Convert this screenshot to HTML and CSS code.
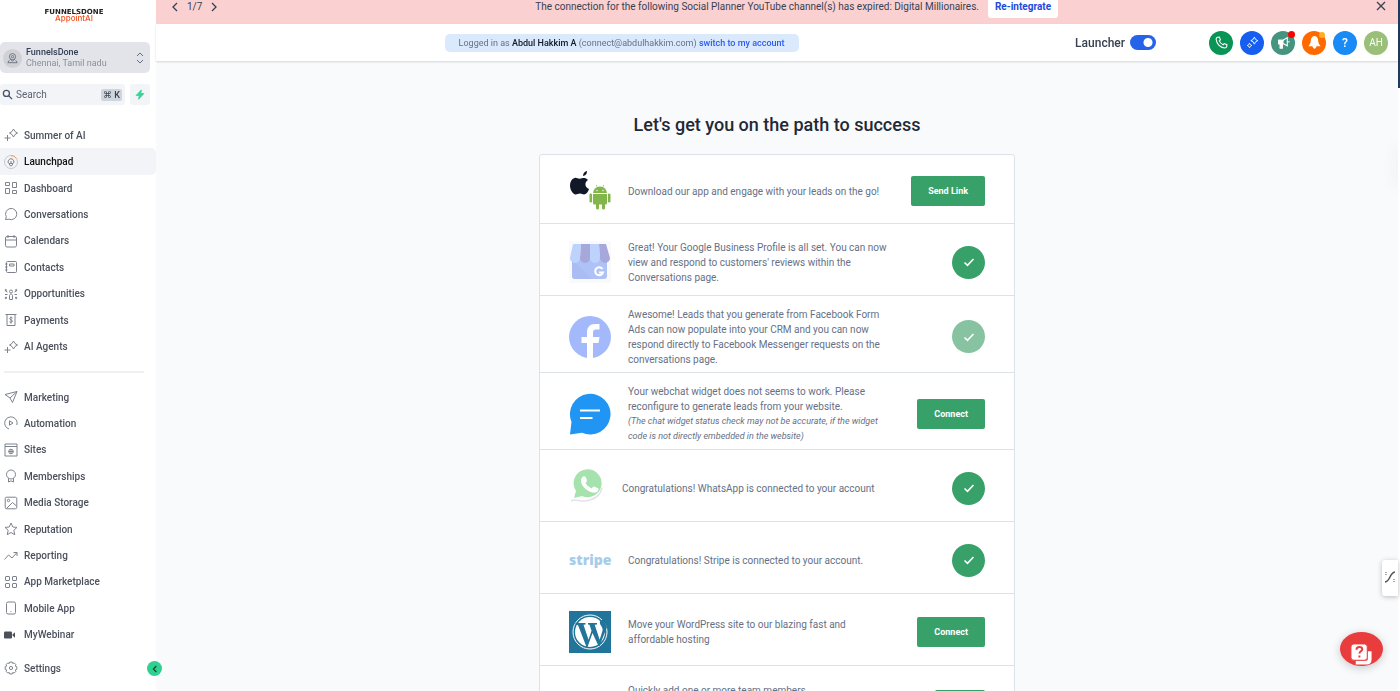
FILE: index.html
```html
<!DOCTYPE html>
<html lang="en">
<head>
    <meta charset="UTF-8">
    <meta name="viewport" content="width=device-width, initial-scale=1.0">
    <title>Launchpad</title>
    <link rel="stylesheet" href="styles.css">
</head>
<body>
    <svg class="sprite" aria-hidden="true">
        <symbol id="sparkles" viewBox="0 0 14 14">
            <path d="M9.5 1 11 3.5 13.500 5 11 6.500 9.500 9 8 6.500 5.500 5 8 3.500zM3.500 7v6M.5 10h6"/>
        </symbol>
        <symbol id="check" viewBox="0 0 12 12">
            <path d="M1.500 6.500 4.500 9.300 10.500 3"/>
        </symbol>
    </svg>

    <div class="app">
        <aside class="sidebar">
            <div class="logo">
                <span class="logo-top">FUNNELSDONE</span>
                <span class="logo-bottom">AppointAI</span>
            </div>

            <button class="account">
                <span class="account-icon">
                    <svg viewBox="0 0 14 14"><circle cx="7" cy="5" r="3.300"/><circle cx="7" cy="5" r="1.200"/><path d="M4.500 7.500 7 10l2.500-2.500M3.500 9 2 11.500h10L10.500 9"/></svg>
                </span>
                <span class="account-text">
                    <strong>FunnelsDone</strong>
                    <span>Chennai, Tamil nadu</span>
                </span>
                <svg class="account-arrows" viewBox="0 0 8 12"><path d="M1 4 4 1 7 4M1 8 4 11 7 8"/></svg>
            </button>

            <div class="search-row">
                <label class="search">
                    <svg viewBox="0 0 12 12"><circle cx="4.800" cy="4.800" r="3.300"/><path d="M7.300 7.300 11 11"/></svg>
                    <input type="text" placeholder="Search" aria-label="Search">
                    <kbd>⌘ K</kbd>
                </label>
                <button class="bolt" aria-label="Quick actions">
                    <svg viewBox="0 0 10 12"><path d="M6.500 1 .8 7h3.400L3.500 11.200 9.200 5H5.800z"/></svg>
                </button>
            </div>

            <nav class="menu">
                <ul class="menu-main">
                    <li><a href="#"><svg><use href="#sparkles"/></svg>Summer of AI</a></li>
                    <li><a href="#" class="active"><svg viewBox="0 0 14 14"><circle cx="7" cy="7" r="6.500" class="ring"/><path d="M7 .5A6.500 6.500 0 0 1 12.500 3.500" class="ring-done"/><path d="M4 7.500C4 2.500 10 2.500 10 7.500L8.500 8.500h-3zM5.500 8.500V10l1.500 1 1.500-1V8.500M7 6v3"/></svg>Launchpad</a></li>
                    <li><a href="#"><svg viewBox="0 0 14 14"><path d="M1.500 1.500h4v3h-4zM1.500 7.500h4v5h-4zM8.500 1.500h4v5h-4zM8.500 9.500h4v3h-4z"/></svg>Dashboard</a></li>
                    <li><a href="#"><svg viewBox="0 0 14 14"><path d="M1.500 12.500 2.300 9.800A5.600 5.600 0 1 1 5 12.200z"/></svg>Conversations</a></li>
                    <li><a href="#"><svg viewBox="0 0 14 14"><rect x="1.500" y="2.500" width="11" height="10.500" rx="1.500"/><path d="M1.500 6h11M4 1v3M10 1v3"/></svg>Calendars</a></li>
                    <li><a href="#"><svg viewBox="0 0 14 14"><rect x="2.500" y="1.500" width="10" height="11" rx="1"/><path d="M5.500 4h4.500v2H5.500zM1 4h2.500M1 7h2.500M1 10h2.500"/></svg>Contacts</a></li>
                    <li><a href="#"><svg viewBox="0 0 14 14"><circle cx="7" cy="4.500" r="1.500"/><path d="M5.500 12.500v-4C5.500 6.500 8.500 6.500 8.500 8.500v4zM1 3.500l2.500 1.500M13 3.500 10.500 5M1 11.500 3 10M13 11.500 11 10M1 7.500h2.500M10.500 7.500H13"/><circle cx="1.800" cy="3" r=".7"/><circle cx="12.200" cy="3" r=".7"/><circle cx="1.800" cy="11" r=".7"/><circle cx="12.200" cy="11" r=".7"/></svg>Opportunities</a></li>
                    <li><a href="#"><svg viewBox="0 0 14 14"><path d="M1.500 1.500h11M3 1.500v11h8v-11M8.500 5C7.500 4 5.500 4.500 5.700 5.700 6 7 8.400 6.700 8.400 8.200 8.300 9.700 6 9.500 5.500 8.700M7 3.500v7"/></svg>Payments</a></li>
                    <li><a href="#"><svg><use href="#sparkles"/></svg>AI Agents</a></li>
                </ul>
                <hr>
                <ul class="menu-more">
                    <li><a href="#"><svg viewBox="0 0 14 14"><path d="M1 4.500 13 1.500 8.500 12.500 6 8zM6 8 13 1.500"/></svg>Marketing</a></li>
                    <li><a href="#"><svg viewBox="0 0 14 14"><path d="M5 13A6.200 6.200 0 1 1 12.800 9M5.500 4.800v4.400L9 7z"/></svg>Automation</a></li>
                    <li><a href="#"><svg viewBox="0 0 14 14"><path d="M1 1h12v12H1zM1 3.500h12"/><circle cx="7" cy="8.500" r="2.300"/><path d="M4.700 8.500h4.600M7 6.200v4.600"/></svg>Sites</a></li>
                    <li><a href="#"><svg viewBox="0 0 14 14"><circle cx="7" cy="5.500" r="4.500"/><path d="M4.500 9.300V13L7 11.800 9.500 13V9.300"/></svg>Memberships</a></li>
                    <li><a href="#"><svg viewBox="0 0 14 14"><rect x="1.200" y="1.200" width="11.600" height="11.600" rx="1.500"/><circle cx="4.500" cy="4.500" r="1.200"/><path d="M2.500 12.500 8.500 6.500 12.500 10"/></svg>Media Storage</a></li>
                    <li><a href="#"><svg viewBox="0 0 14 14"><path d="m7 1 1.800 4 4.200.4-3.200 2.900 1 4.400L7 10.500l-3.800 2.200 1-4.400L1 5.400 5.200 5z"/></svg>Reputation</a></li>
                    <li><a href="#"><svg viewBox="0 0 14 14"><path d="M.5 10.500 4.500 6 8 9l5-5.500M9.500 3.500H13V7"/></svg>Reporting</a></li>
                    <li><a href="#"><svg viewBox="0 0 14 14"><rect x="1.500" y="1.500" width="4" height="4" rx=".5"/><rect x="8.500" y="1.500" width="4" height="4" rx=".5"/><rect x="1.500" y="8.500" width="4" height="4" rx=".5"/><rect x="8.500" y="8.500" width="4" height="4" rx=".5"/></svg>App Marketplace</a></li>
                    <li><a href="#"><svg viewBox="0 0 14 14"><rect x="2.500" y="1" width="9" height="12" rx="1.500"/><path d="M6.600 10.500h.8"/></svg>Mobile App</a></li>
                    <li><a href="#"><svg viewBox="0 0 14 14" class="solid"><rect x="0" y="3.500" width="8" height="7" rx="1.200"/><path d="M8.500 6.500 11 4.200v5.600L8.500 7.500z"/></svg>MyWebinar</a></li>
                </ul>
                <a href="#" class="settings"><svg viewBox="0 0 14 14"><path d="m5.800 1h2.400l.5 1.500 1.500-.6 1.700 1.700-.6 1.500 1.500.6v2.600l-1.500.6.6 1.500-1.700 1.700-1.500-.6-.5 1.500H5.800l-.5-1.500-1.500.6-1.700-1.700.6-1.500L1.200 8.300V5.700l1.500-.6-.6-1.500 1.700-1.700 1.500.6z"/><circle cx="7" cy="7" r="1.600"/></svg>Settings</a>
            </nav>

            <button class="collapse" aria-label="Collapse menu">
                <svg viewBox="0 0 8 8"><path d="M5.300 1 2.500 4l2.800 3"/></svg>
            </button>
        </aside>

        <div class="page">
            <div class="banner">
                <div class="pager">
                    <button aria-label="Previous"><svg viewBox="0 0 6 10"><path d="M5 1 1 5l4 4"/></svg></button>
                    <span>1/7</span>
                    <button aria-label="Next"><svg viewBox="0 0 6 10"><path d="m1 1 4 4-4 4"/></svg></button>
                </div>
                <div class="banner-message">
                    <span>The connection for the following Social Planner YouTube channel(s) has expired: Digital Millionaires.</span>
                    <button class="reintegrate">Re-integrate</button>
                </div>
                <button class="banner-close" aria-label="Close"><svg viewBox="0 0 10 10"><path d="m1 1 8 8M9 1 1 9"/></svg></button>
            </div>

            <header class="topbar">
                <div class="login-wrap">
                    <p class="login-note">Logged in as <b>Abdul Hakkim A</b> (connect@abdulhakkim.com) <a href="#">switch to my account</a></p>
                </div>
                <label class="launcher">Launcher <input type="checkbox" checked></label>
                <div class="actions">
                    <button class="action phone" aria-label="Phone"><svg viewBox="0 0 12 12"><path d="M2.300 1.200 4 1 5 3.500 3.900 4.500Q5 7 7.500 8.100L8.500 7 11 8l-.2 1.700Q10.500 11 9 11C4.500 10.500 1.500 7 1 3 1 1.800 1.600 1.300 2.300 1.200z"/></svg></button>
                    <button class="action ai" aria-label="AI"><svg viewBox="0 0 14 14"><path d="M9 1.200 10.300 3.700 12.800 5 10.300 6.300 9 8.800 7.700 6.300 5.200 5 7.700 3.700zM3.800 7.800 4.700 9.300 6.200 10.200 4.700 11.100 3.800 12.600 2.900 11.100 1.400 10.200 2.900 9.300z"/></svg></button>
                    <button class="action news" aria-label="Announcements"><svg viewBox="0 0 12 12"><path d="M1.500 4h4L9.500 1.500v7.500L5.500 7h-4zM3 7v4h2V7" /><path d="M1.500 4h4v3h-4zM3 7h2v4H3z" class="fill"/><path d="M11 4.500v1.500"/></svg><i class="dot"></i></button>
                    <button class="action bell" aria-label="Notifications"><svg viewBox="0 0 12 12"><path class="fill" d="M6 .5C3.500 1 3 3 3 5c0 2-.7 2.700-1.700 4h9.400C9.700 7.700 9 7 9 5c0-2-.5-4-3-4.500zM4.800 10h2.400Q6 12.500 4.800 10z"/></svg><i class="dot"></i></button>
                    <button class="action help">?</button>
                    <button class="action avatar">AH</button>
                </div>
            </header>

            <main class="content">
                <h1>Let's get you on the path to success</h1>
                <div class="steps">
                    <section class="step first">
                        <svg class="step-icon" viewBox="0 0 42 42">
                            <path fill="#111827" d="M14 6C14 3 16 1.500 18 1c.2 2.800-1.500 4.800-4 5zM5.500 8C7.500 7.300 9 9 11 8.700c2-.2 5-2 8 1.300-4 2.500-3 7.500 1 9-1 3-3 5.500-5 5.500-1.500 0-2-1-4-1s-2.800 1-4.300 1C3.500 24 1 19.500 1 15.500 1 12 2.500 9 5.500 8z"/>
                            <path fill="#82b64a" d="M24 23c.4-3.200 2-5 4-5.800L26.800 15l.5-.2 1.200 2.100q2.500-.7 5 0l1.200-2.100.5.200L34 17.200c2 .8 3.600 2.600 4 5.800zM24 24h14v9q0 1.500-1.500 1.500H36V38q0 1.500-1.500 1.500T33 38v-3.500h-3V38q0 1.500-1.500 1.500T27 38v-3.500h-1.500Q24 34.500 24 33z"/>
                            <rect x="20.500" y="23.500" width="2.600" height="9" rx="1.300" fill="#82b64a"/><rect x="38.900" y="23.500" width="2.600" height="9" rx="1.300" fill="#82b64a"/>
                            <circle cx="28" cy="20.500" r=".7" fill="#fff"/><circle cx="34" cy="20.500" r=".7" fill="#fff"/>
                        </svg>
                        <p>Download our app and engage with your leads on the go!</p>
                        <button class="btn">Send Link</button>
                    </section>
                    <section class="step">
                        <svg class="step-icon" viewBox="0 0 42 42">
                            <path fill="#fafafc" d="M0 0h42v42H0z"/>
                            <path fill="#aec2f8" d="M3 15h35v20q0 3-3 3H6q-3 0-3-3z"/>
                            <path fill="#a3b5ed" d="M3 18 22 38H6q-3 0-3-3z" opacity=".5"/>
                            <path fill="#bdd3fb" d="M4 3h8l-1 14a5 5 0 0 1-10 0z"/>
                            <path fill="#a6a8dc" d="M12 3h9v14a5 5 0 0 1-10 0z"/>
                            <path fill="#bdd3fb" d="M21 3h9l1 14a5 5 0 0 1-10 0z"/>
                            <path fill="#a6a8dc" d="M30 3h7l4 14a5 5 0 0 1-10 0z"/>
                            <path fill="none" stroke="#fff" stroke-width="2" d="M33.500 28a4 4 0 1 0 .5 3.500h-4"/>
                        </svg>
                        <p>Great! Your Google Business Profile is all set. You can now view and respond to customers' reviews within the Conversations page.</p>
                        <span class="done"><svg><use href="#check"/></svg></span>
                    </section>
                    <section class="step tall">
                        <svg class="step-icon" viewBox="0 0 42 42">
                            <circle cx="21" cy="21" r="21" fill="#a3b9fb"/>
                            <path fill="#fff" d="M18 42V27h-5.500v-6H18v-4.500C18 11 21 8 26 8h4.500v5.500H27q-3 0-3 3V21h6.500l-1 6H24v15z"/>
                        </svg>
                        <p>Awesome! Leads that you generate from Facebook Form Ads can now populate into your CRM and you can now respond directly to Facebook Messenger requests on the conversations page.</p>
                        <span class="done faded"><svg><use href="#check"/></svg></span>
                    </section>
                    <section class="step tall">
                        <svg class="step-icon" viewBox="0 0 42 42">
                            <path fill="#2095f3" d="M1 41.500 2.500 29A20.300 20.300 0 1 1 13 39.700z"/>
                            <path stroke="#fff" stroke-width="2" d="M11 17.500h20M11 25h12.500"/>
                        </svg>
                        <p>Your webchat widget does not seems to work. Please reconfigure to generate leads from your website. <em>(The chat widget status check may not be accurate, if the widget code is not directly embedded in the website)</em></p>
                        <button class="btn">Connect</button>
                    </section>
                    <section class="step whatsapp">
                        <svg class="step-icon" viewBox="0 0 36 42">
                            <path fill="none" stroke="#e3e3ea" stroke-width="1.500" d="M2 34c5-3 8 1 14 0 9-1 15-5 17-13"/>
                            <path fill="#a6e2ad" d="M5 31 7 24A14 14 0 1 1 13 29z"/>
                            <path fill="#fff" d="M14 9.500q2-1 2.700.8l1.300 3q.2 1-1.500 2.700 2 4 6 5.500l2-2q.6-.6 4.500 1.800 1 .7 0 2.500c-2 3-6 2-9.500.2-4-2.200-7-6-7.500-9.500-.2-2 .5-4 2-5z"/>
                        </svg>
                        <p>Congratulations! WhatsApp is connected to your account</p>
                        <span class="done"><svg><use href="#check"/></svg></span>
                    </section>
                    <section class="step">
                        <span class="step-icon stripe">stripe</span>
                        <p>Congratulations! Stripe is connected to your account.</p>
                        <span class="done"><svg><use href="#check"/></svg></span>
                    </section>
                    <section class="step">
                        <svg class="step-icon" viewBox="0 0 42 42">
                            <path fill="#21759b" d="M0 0h42v42H0z"/>
                            <circle cx="21" cy="21" r="17" fill="none" stroke="#fff"/>
                            <circle cx="21" cy="21" r="15" fill="#fff"/>
                            <path fill="#21759b" d="M6.500 12h10v1.500l-2 .3 5 15 3-9-2-6-1.500-.3V12h9v1.500l-2.300.3 5 15 2.800-9C34.500 16 30 14 31 10.500q1-2.500 4-1.500l3 7-7.500 19h-1L23.500 22l-5 14h-1L9 14l-2.500-.5z"/>
                        </svg>
                        <p>Move your WordPress site to our blazing fast and affordable hosting</p>
                        <button class="btn">Connect</button>
                    </section>
                    <section class="step last">
                        <span class="step-icon"></span>
                        <p>Quickly add one or more team members</p>
                        <button class="btn" aria-label="Add team members"></button>
                    </section>
                </div>
            </main>
        </div>
    </div>

    <div class="edge-bar"></div>
    <div class="edge-shadow"></div>
    <button class="side-tab" aria-label="Open panel">
        <svg viewBox="0 0 10 12"><path stroke-width="1.500" d="M0 11c6-1 4-9 10-10" /><path d="M1 1v4M9 8v4" stroke-dasharray="1 1"/></svg>
    </button>
    <button class="support" aria-label="Support">
        <svg viewBox="0 0 24 24">
            <path fill="none" stroke="#fff" stroke-width="4" d="M20.500 8.500V17q0 3.500-3 3.500H6"/>
            <rect x="1" y="1" width="17" height="17" rx="3" fill="#fff" stroke="#e93d3d"/>
            <path fill="none" stroke="#e93d3d" stroke-width="2" d="M6.800 7c0-4 6-3.500 6-.5 0 2-3 2.300-3 4.500M9.800 13v2"/>
        </svg>
    </button>
</body>
</html>
```
FILE: styles.css
```css
* {
    box-sizing: border-box;
}
body {
    margin: 0;
    height: 100vh;
    overflow: hidden;
    font-family: Roboto, "Liberation Sans", sans-serif;
    font-size: 10px;
    color: #374151;
    background: #fff;
}
button {
    padding: 0;
    border: none;
    background: none;
    font-family: inherit;
    color: inherit;
    cursor: pointer;
}
svg {
    fill: none;
    stroke: currentColor;
    stroke-width: 1;
}
a {
    text-decoration: none;
}
p {
    margin: 0;
}
.sprite {
    display: none;
}
.app {
    display: flex;
    height: 100%;
    padding-right: 2px;
}

/* Sidebar */
.sidebar {
    position: relative;
    display: flex;
    flex-direction: column;
    width: 156px;
    flex-shrink: 0;
    padding-top: 9px;
    z-index: 2;
}
.logo {
    display: flex;
    flex-direction: column;
    align-items: center;
    height: 33px;
    padding-right: 8px;
}
.logo-top {
    font-family: "DejaVu Sans", sans-serif;
    font-size: 7px;
    font-weight: bold;
    line-height: 6px;
    color: #222;
}
.logo-bottom {
    font-family: Inter, sans-serif;
    font-size: 8px;
    font-weight: 500;
    line-height: 7px;
    color: #f4511e;
}
.account {
    display: flex;
    align-items: center;
    gap: 4px;
    height: 31px;
    margin-right: 6px;
    padding: 1px 6px 0 3px;
    border-radius: 5px;
    background: #e2e4e9;
    text-align: left;
}
.account-icon {
    display: flex;
    padding: 3px;
    border-radius: 50%;
    background: #cfd1d5;
    color: #6b7280;
}
.account-icon svg {
    width: 13px;
    height: 13px;
}
.account-text {
    display: flex;
    flex-direction: column;
    flex: 1;
    font-size: 9px;
    line-height: 11px;
    color: #8a8f9c;
}
.account-text strong {
    font-weight: 500;
    color: #344054;
}
.account-arrows {
    width: 8px;
    height: 12px;
    color: #667085;
}
.search-row {
    display: flex;
    gap: 5px;
    height: 21px;
    margin: 11px 6px 17px 0;
}
.search {
    display: flex;
    flex: 1;
    align-items: center;
    gap: 3px;
    padding: 0 3px 0 2px;
    border-radius: 3px;
    background: #f2f4f7;
    color: #475467;
}
.search svg {
    width: 11px;
    height: 11px;
    flex-shrink: 0;
    stroke-width: 1.4;
}
.search input {
    width: 0;
    flex: 1;
    padding: 0;
    border: none;
    outline: none;
    background: none;
    font: inherit;
    color: inherit;
}
.search input::placeholder {
    color: #5b6472;
}
.search kbd {
    padding: 0 2px;
    border-radius: 2px;
    background: #d0d4dc;
    font-family: Roboto, "DejaVu Sans", sans-serif;
    font-size: 9px;
    font-weight: 500;
    line-height: 12px;
    color: #374151;
}
.bolt {
    width: 20px;
    border-radius: 3px;
    background: #f2f4f7;
}
.bolt svg {
    display: block;
    width: 10px;
    height: 11px;
    margin: auto;
    fill: #36d399;
    stroke: #36d399;
}
.menu {
    display: flex;
    flex: 1;
    flex-direction: column;
    min-height: 0;
}
.menu ul {
    display: flex;
    flex-direction: column;
    margin: 0;
    padding: 0;
    list-style: none;
}
.menu .menu-main {
    flex: 9 1 0;
}
.menu .menu-more {
    flex: 10 1 0;
}
.menu li {
    display: flex;
    flex: 1;
}
.menu a {
    display: flex;
    flex: 1;
    align-items: center;
    gap: 6px;
    padding-left: 4px;
    border-radius: 0 5px 5px 0;
    font-weight: 500;
    color: #4b515c;
}
.menu a.active {
    background: #f2f4f7;
    color: #111;
}
.menu svg {
    width: 14px;
    height: 14px;
    flex-shrink: 0;
    color: #7d828c;
}
.menu svg.solid {
    fill: #4b5059;
    stroke: none;
}
.menu .ring {
    stroke: #c4c8cf;
}
.menu .ring-done {
    stroke: #f59e5b;
}
.menu hr {
    width: 140px;
    height: 2px;
    margin: 11px 0 11px 4px;
    border: none;
    background: #eef0f2;
}
.menu .settings {
    flex: none;
    height: 26px;
    margin: 7px 0 10px;
}
.collapse {
    position: absolute;
    right: -6px;
    bottom: 15px;
    width: 15px;
    height: 15px;
    border-radius: 50%;
    background: #2fd092;
    color: #14532d;
}
.collapse svg {
    display: block;
    width: 8px;
    height: 8px;
    margin: auto;
    stroke-width: 1.4;
}

/* Top area */
.page {
    display: flex;
    flex: 1;
    flex-direction: column;
    min-width: 0;
}
.banner {
    display: flex;
    align-items: flex-end;
    height: 24px;
    flex-shrink: 0;
    padding: 0 12px 6px 16px;
    overflow: hidden;
    background: #fad1d0;
    line-height: 22px;
}
.banner svg {
    height: 10px;
    stroke-width: 1.3;
}
.pager {
    display: flex;
    gap: 9px;
}
.pager svg {
    width: 6px;
}
.banner-message {
    display: flex;
    flex: 1;
    justify-content: center;
    gap: 9px;
    white-space: nowrap;
}
.reintegrate {
    padding: 0 7px;
    border-radius: 3px;
    background: #fff;
    font-size: 10px;
    font-weight: 700;
    line-height: 22px;
    color: #2348dc;
}
.banner-close {
    line-height: 22px;
}
.banner-close svg {
    width: 10px;
}
.topbar {
    display: flex;
    align-items: center;
    height: 37px;
    flex-shrink: 0;
    padding: 0 10px 0 22px;
    background: #fff;
    box-shadow: 0 1px 2px rgba(0, 0, 0, 0.15);
    z-index: 1;
}
.login-wrap {
    display: flex;
    flex: 1;
    justify-content: center;
}
.login-note {
    padding: 0 14px;
    border-radius: 5px;
    background: #dbe9fd;
    font-size: 9px;
    line-height: 18px;
    color: #667085;
}
.login-note b {
    font-weight: 500;
    color: #111827;
}
.login-note a {
    font-weight: 500;
    color: #2a5cf0;
}
.launcher {
    display: flex;
    align-items: center;
    gap: 5px;
    margin: 0 53px 0 10px;
    font-size: 12px;
    font-weight: 500;
}
.launcher input {
    appearance: none;
    width: 26px;
    height: 15px;
    margin: 0;
    border-radius: 8px;
    background: radial-gradient(circle at 18px 50%, #fff 4px, #2563eb 5px);
}
.actions {
    display: flex;
    gap: 7px;
}
.action {
    position: relative;
    display: flex;
    align-items: center;
    justify-content: center;
    width: 24px;
    height: 24px;
    border-radius: 50%;
    color: #fff;
    font-size: 12px;
}
.action svg {
    width: 13px;
    height: 13px;
}
.action .fill {
    fill: #fff;
}
.phone {
    background: #079455;
}
.ai {
    background: #155eef;
}
.news {
    background: #459480;
}
.bell {
    background: #ff6a00;
}
.help {
    background: #188bf6;
    font-weight: 500;
}
.avatar {
    background: #9abf78;
    font-size: 10px;
}
.dot {
    position: absolute;
    top: 0;
    right: 0;
    width: 7px;
    height: 7px;
    border-radius: 50%;
    background: #f00;
}
.bell .dot {
    top: 1px;
    right: 1px;
    width: 6px;
    height: 6px;
    background: #fdb022;
}

/* Launchpad steps */
.content {
    flex: 1;
    min-height: 0;
    padding-top: 52px;
    overflow: hidden;
    background: #f9fafb;
}
h1 {
    margin: 0 0 17px;
    font-size: 18px;
    font-weight: 500;
    line-height: 24px;
    text-align: center;
    color: #1f2937;
}
.steps {
    max-width: 476px;
    margin: 0 auto;
    border: 1px solid #dde2ea;
    border-radius: 3px;
    background: #fff;
}
.step {
    display: flex;
    align-items: center;
    min-height: 72px;
    padding: 5px 29px 0;
    border-bottom: 1px solid #dde2ea;
}
.step.first {
    min-height: 69px;
    padding-top: 4px;
}
.step.tall {
    min-height: 77px;
}
.step.last {
    align-items: flex-start;
    padding-top: 17px;
}
.step-icon {
    width: 42px;
    height: 42px;
    flex-shrink: 0;
    margin-right: 17px;
    stroke: none;
}
.whatsapp .step-icon {
    width: 36px;
}
.stripe {
    font-family: "Open Sans", sans-serif;
    font-size: 14px;
    font-weight: 800;
    line-height: 42px;
    color: #a5cdea;
}
.step p {
    max-width: 266px;
    line-height: 15px;
    color: #667085;
}
.step em {
    display: block;
    font-size: 9px;
}
.btn,
.done {
    flex-shrink: 0;
    margin-left: auto;
    background: #38a169;
    color: #fff;
}
.btn {
    padding: 0 17px;
    border-radius: 2px;
    font-size: 9px;
    font-weight: 700;
    line-height: 30px;
}
.last .btn {
    width: 50px;
    height: 30px;
    margin-top: 7px;
}
.done {
    display: flex;
    width: 33px;
    height: 33px;
    border-radius: 50%;
}
.done.faded {
    background: #87c3a1;
}
.done svg {
    width: 12px;
    height: 12px;
    margin: auto;
    stroke-width: 1.6;
}

/* Widgets on the right edge */
.edge-bar {
    position: fixed;
    top: 0;
    right: 0;
    width: 2px;
    height: 88px;
    background: #1e3a5f;
}
.edge-shadow {
    position: fixed;
    top: 144px;
    right: 0;
    width: 2px;
    height: 44px;
    background: #fff;
    box-shadow: 0 0 16px rgba(0, 0, 0, 0.2);
}
.side-tab {
    position: fixed;
    top: 560px;
    right: 2px;
    width: 16px;
    height: 36px;
    border-radius: 3px 0 0 3px;
    background: #fff;
    box-shadow: 0 1px 5px rgba(0, 0, 0, 0.25);
    color: #555;
}
.side-tab svg {
    width: 10px;
    height: 12px;
}
.support {
    position: fixed;
    right: 17px;
    bottom: 25px;
    display: flex;
    align-items: flex-end;
    justify-content: center;
    width: 43px;
    height: 34px;
    border-radius: 50%;
    background: #e93d3d;
    box-shadow: 0 2px 10px rgba(0, 0, 0, 0.2);
}
.support svg {
    width: 23px;
    height: 23px;
    stroke: none;
}
```
